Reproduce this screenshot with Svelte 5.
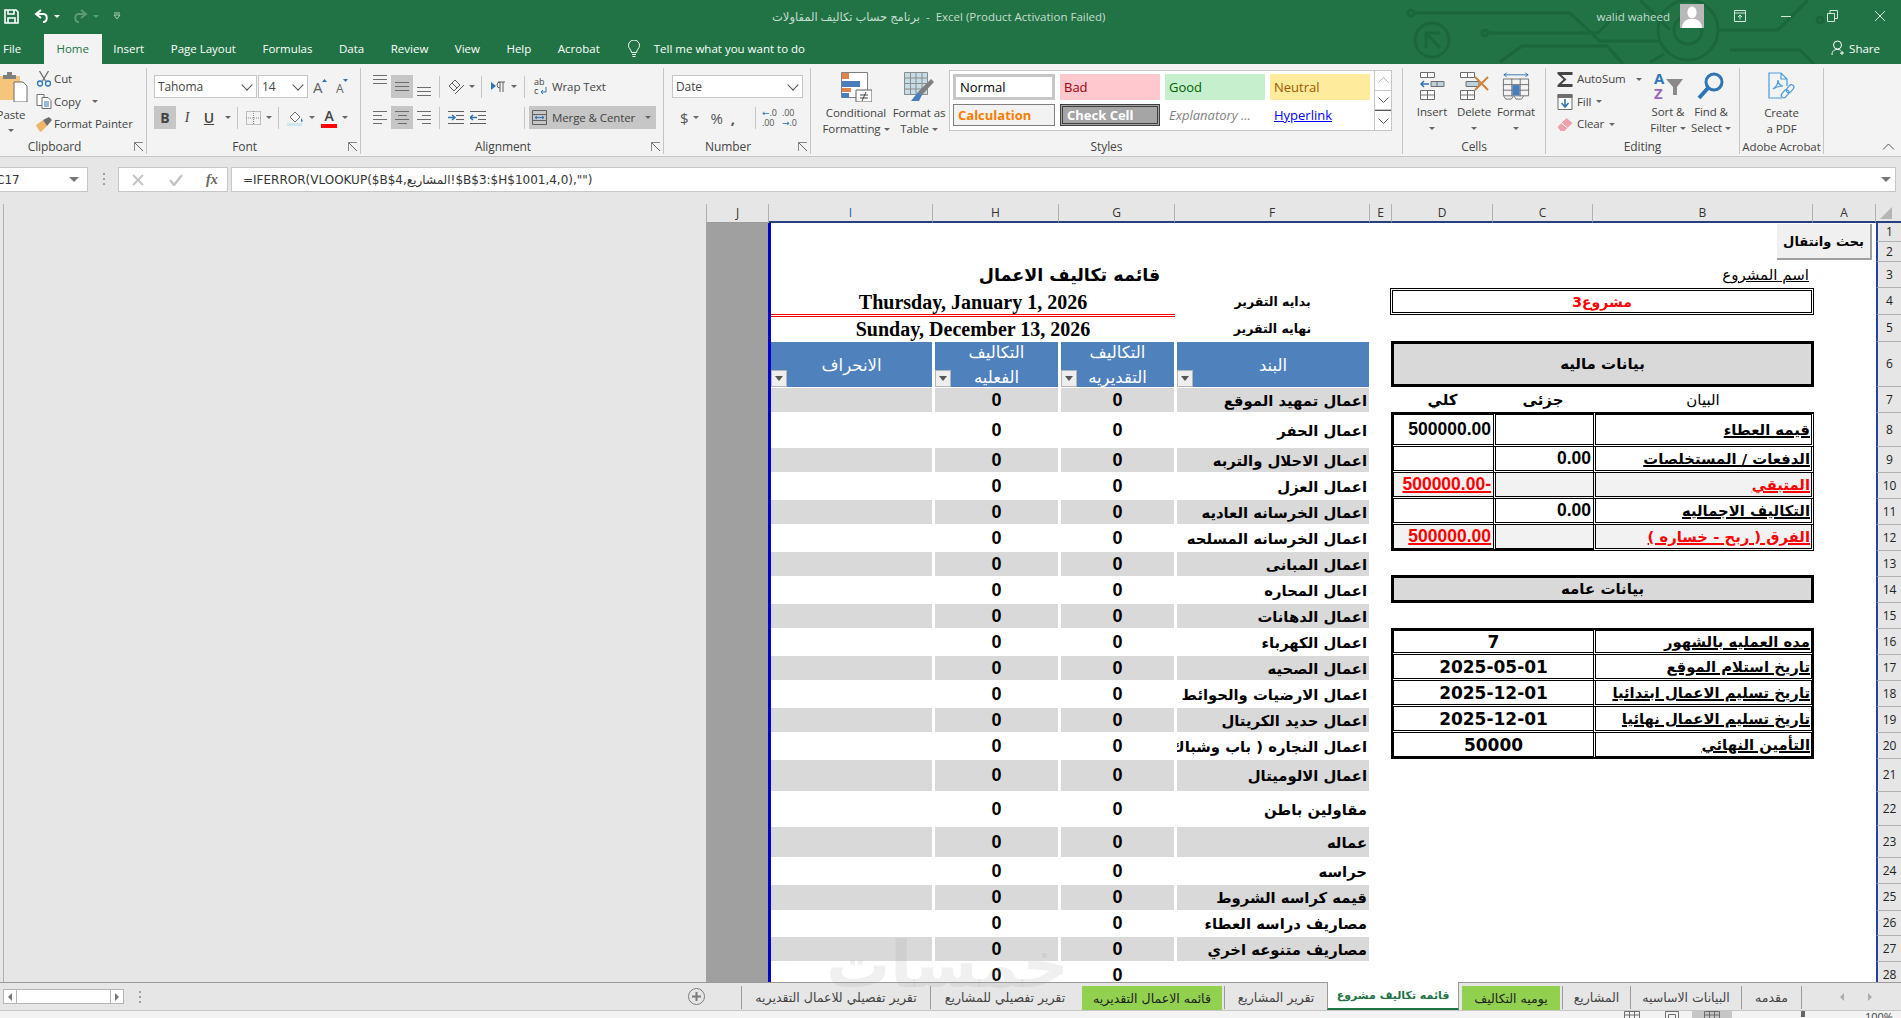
<script>
	const cols = ['J', 'I', 'H', 'G', 'F', 'E', 'D', 'C', 'B', 'A'];
	const rows = Array.from({ length: 28 }, (_, i) => i + 1);

	const items = [
		'اعمال تمهيد الموقع',
		'اعمال الحفر',
		'اعمال الاحلال والتربه',
		'اعمال العزل',
		'اعمال الخرسانه العاديه',
		'اعمال الخرسانه المسلحه',
		'اعمال المبانى',
		'اعمال المحاره',
		'اعمال الدهانات',
		'اعمال الكهرباء',
		'اعمال الصحيه',
		'اعمال الارضيات والحوائط',
		'اعمال حديد الكريتال',
		'اعمال النجاره ( باب وشباك )',
		'اعمال الالوميتال',
		'مقاولين باطن',
		'عماله',
		'حراسه',
		'قيمه كراسه الشروط',
		'مصاريف دراسه العطاء',
		'مصاريف متنوعه اخري',
		''
	];

	const finance = [
		{ r: 8, label: 'قيمه العطاء', part: '', total: '500000.00' },
		{ r: 9, label: 'الدفعات / المستخلصات', part: '0.00', total: '' },
		{ r: 10, label: 'المتبقي', part: '', total: '500000.00-', red: true },
		{ r: 11, label: 'التكاليف الاجماليه', part: '0.00', total: '' },
		{ r: 12, label: 'الفرق ( ربح - خساره )', part: '', total: '500000.00', red: true, last: true }
	];

	const general = [
		{ r: 16, label: 'مده العمليه بالشهور', value: '7' },
		{ r: 17, label: 'تاريخ استلام الموقع', value: '2025-05-01' },
		{ r: 18, label: 'تاريخ تسليم الاعمال ابتدائيا', value: '2025-12-01' },
		{ r: 19, label: 'تاريخ تسليم الاعمال نهائيا', value: '2025-12-01' },
		{ r: 20, label: 'التأمين النهائي', value: '50000' }
	];

	const sheetTabs = [
		{ name: 'تقرير تفصيلي للاعمال التقديريه' },
		{ name: 'تقرير تفصيلي للمشاريع' },
		{ name: 'قائمه الاعمال التقديريه', green: true },
		{ name: 'تقرير المشاريع' },
		{ name: 'قائمه تكاليف مشروع', active: true },
		{ name: 'يوميه التكاليف', green: true },
		{ name: 'المشاريع' },
		{ name: 'البيانات الاساسيه' },
		{ name: 'مقدمه' }
	];

	const menu = ['Insert', 'Page Layout', 'Formulas', 'Data', 'Review', 'View', 'Help', 'Acrobat'];
</script>

<div class="app">
	<header class="title">
		<svg class="circuit" width="520" height="64" viewBox="0 0 520 64" fill="none" stroke="#1b663c" stroke-width="3">
			<circle cx="11" cy="13" r="3" />
			<path d="M14 13H170l30 28h60" />
			<circle cx="32" cy="40" r="17" />
			<path d="M26 48V33h14M26 33l14 15" />
			<circle cx="85" cy="33" r="3" />
			<path d="M88 33h110l22-22" />
			<path d="M100 62l22-16h85l16 18" />
			<circle cx="288" cy="30" r="30" />
			<circle cx="288" cy="30" r="14" />
			<path d="M240 0l30 30M318 30h60l30-30M330 50h70l14 14M250 62l14-8" />
			<circle cx="420" cy="20" r="3" />
		</svg>
		<div class="qat">
			<svg width="15" height="15" viewBox="0 0 15 15" fill="none" stroke="#fff" stroke-width="1.6"><path d="M1 1h11l2 2v11H1zM4 1v4h6V1M4 14V9h7v5" /></svg>
			<svg class="undo" width="15" height="14" viewBox="0 0 15 14" fill="none" stroke="#fff" stroke-width="2"><path d="M7 1L2 5l5 4M2 5h7c5 0 5 8 0 8" /></svg>
			<i class="car white"></i>
			<svg class="redo" width="15" height="14" viewBox="0 0 15 14" fill="none" stroke="#5c9a78" stroke-width="2"><path d="M8 1l5 4-5 4M13 5H6c-5 0-5 8 0 8" /></svg>
			<i class="car dim"></i>
			<svg class="custom" width="8" height="8" viewBox="0 0 8 8" fill="none" stroke="#a9cdb9"><path d="M1 1h6M1 3l3 4 3-4z" /></svg>
		</div>
		<div class="doc">برنامج حساب تكاليف المقاولات &nbsp;-&nbsp; Excel (Product Activation Failed)</div>
		<div class="win">
			<span class="user">walid waheed</span>
			<span class="avatar">
				<svg width="24" height="24" viewBox="0 0 24 24" fill="#fff"><ellipse cx="12" cy="8.5" rx="4.6" ry="6" /><path d="M2 24c0-6 4-8 7-9h6c3 1 7 3 7 9z" /></svg>
			</span>
			<svg class="w1" width="12" height="12" viewBox="0 0 12 12" fill="none" stroke="#d6e7dd"><path d="M.5.5h11v11H.5zM.5 3h11M6 9.5V5M4 7l2-2 2 2" /></svg>
			<svg class="w2" width="11" height="12" viewBox="0 0 11 12" stroke="#d6e7dd"><path d="M0 6.5h10" /></svg>
			<svg class="w3" width="11" height="12" viewBox="0 0 11 12" fill="none" stroke="#d6e7dd"><path d="M.5 3.5h7v8h-7zM3 3.5V.5h7.500v8H7.500" /></svg>
			<svg class="w4" width="12" height="12" viewBox="0 0 12 12" stroke="#d6e7dd"><path d="M1 1l10 10M11 1L1 11" /></svg>
		</div>
	</header>

	<nav class="menu">
		<span class="file">File</span>
		<span class="home">Home</span>
		{#each menu as m}
			<span>{m}</span>
		{/each}
		<svg class="bulb" width="12" height="17" viewBox="0 0 12 17" fill="none" stroke="#fff"><path d="M3.500 12.500C3 9 .5 8.500.5 5.500a5.500 5.500 0 0 1 11 0c0 3-2.500 3.500-3 7zM4 14.500h4M4.500 16.500h3" /></svg>
		<span class="tell">Tell me what you want to do</span>
		<span class="share">
			<svg width="15" height="16" viewBox="0 0 15 16" fill="none" stroke="#fff"><circle cx="6.500" cy="5" r="4" /><path d="M1 15c0-4 2-5.500 5.500-5.500 1.500 0 2.500.3 3.300.9M11 11v4M9 13h4" /></svg>
			Share
		</span>
	</nav>

	<section class="ribbon">
		<div class="grp clip">
			<div class="body">
				<div class="paste">
					<svg width="28" height="30" viewBox="0 0 28 30">
						<path d="M-2 4h22v24H-2z" fill="#f5c57c" />
						<path d="M3 3h4V0h5v3h4v4H3z" fill="#7f7f7f" />
						<path d="M14 10h9l4 4v16H14z" fill="#fff" stroke="#6d6d6d" />
					</svg>
					<span>Paste</span>
					<i class="car"></i>
				</div>
				<div class="stack">
					<div class="si">
						<svg width="15" height="16" viewBox="0 0 15 16" fill="none" stroke="#6d6d6d" stroke-width="1.300"><path d="M3 0l6 10M12 0L6 10" /><circle cx="3.500" cy="12.500" r="2.500" stroke="#2f75b5" /><circle cx="11.500" cy="12.500" r="2.500" stroke="#2f75b5" /></svg>
						<span>Cut</span>
					</div>
					<div class="si">
						<svg width="15" height="15" viewBox="0 0 15 15" fill="#fff" stroke="#6d6d6d"><path d="M.5.5h7v11h-7z" /><path d="M5.500 3.500h6l3 3v8h-9z" /><path d="M7.500 8h5M7.500 10h5M7.500 12h5" stroke="#2f75b5" /></svg>
						<span>Copy</span>
						<i class="car copycar"></i>
					</div>
					<div class="si">
						<svg width="16" height="15" viewBox="0 0 16 15"><path d="M0 8l7-5 4 6-6 6C3 14 1 11 0 8z" fill="#efb66a" /><path d="M7 3l6-3 3 3-5 6z" fill="#6d6d6d" /></svg>
						<span>Format Painter</span>
					</div>
				</div>
			</div>
			<div class="label">Clipboard<b class="launch"></b></div>
		</div>

		<div class="grp font">
			<div class="body col">
				<div class="line">
					<div class="select fname">Tahoma<i class="chev"></i></div>
					<div class="select fsize">14<i class="chev"></i></div>
					<svg class="grow" width="14" height="15" viewBox="0 0 14 15"><text x="0" y="14" font-size="15" fill="#5f5f5f" font-family="Open Sans">A</text><path d="M9 3l2.500-3L14 3z" fill="#2f75b5" /></svg>
					<svg class="shrink" width="14" height="15" viewBox="0 0 14 15"><text x="1" y="14" font-size="12" fill="#5f5f5f" font-family="Open Sans">A</text><path d="M8 0h5l-2.500 3z" fill="#2f75b5" /></svg>
				</div>
				<div class="line second">
					<span class="tool on bold">B</span>
					<span class="tool ital">I</span>
					<span class="tool under">U</span><i class="car"></i>
					<b class="sep"></b>
					<svg class="bord" width="15" height="14" viewBox="0 0 15 14" fill="none" stroke="#8a8a8a" stroke-dasharray="1 1"><path d="M.5.500h14v13H.5zM7.500 0v14M0 7h15" /></svg><i class="car"></i>
					<b class="sep"></b>
					<svg class="fill" width="17" height="16" viewBox="0 0 17 16"><path d="M3 7l5-5 5 5-5 5z" fill="#fff" stroke="#6d6d6d" /><path d="M14 8l2 3-2 1z" fill="#2f75b5" /><path d="M0 13h15v3H0z" fill="#cfe6ee" /></svg><i class="car"></i>
					<span class="acolor">A</span><i class="car"></i>
				</div>
			</div>
			<div class="label">Font<b class="launch"></b></div>
		</div>

		<div class="grp align">
			<div class="body col">
				<div class="line">
					<span class="al top"><b></b><b></b><b></b></span>
					<span class="al on mid"><b></b><b></b><b></b></span>
					<span class="al bot"><b></b><b></b><b></b></span>
					<b class="sep s1"></b>
					<svg class="orient" width="17" height="15" viewBox="0 0 17 15" fill="none" stroke="#5f5f5f"><path d="M1 7l6-6 5 5-6 6zM4 4l5 5M16 6L7 15" /></svg><i class="car"></i>
					<b class="sep s2"></b>
					<svg class="rtl" width="15" height="12" viewBox="0 0 15 12"><path d="M0 1l5 4-5 4z" fill="#2f75b5" /><path d="M7 1h7M9 1v10M12 1v10M9 1a3 3 0 0 0 0 6" fill="none" stroke="#5f5f5f" /></svg><i class="car"></i>
					<b class="sep s3"></b>
					<span class="wrap"><svg width="15" height="17" viewBox="0 0 15 17" fill="none"><text x="0" y="7" font-size="9" fill="#444" font-family="Open Sans">ab</text><text x="0" y="16" font-size="9" fill="#444" font-family="Open Sans">c</text><path d="M12 9v5H7M9 12l-2 2 2 2" stroke="#2f75b5" /></svg>Wrap Text</span>
				</div>
				<div class="line second">
					<span class="al hl"><b></b><b class="s"></b><b></b><b class="s"></b></span>
					<span class="al on hc"><b></b><b class="s"></b><b></b><b class="s"></b></span>
					<span class="al hr"><b></b><b class="s"></b><b></b><b class="s"></b></span>
					<b class="sep s1"></b>
					<svg class="ind" width="16" height="13" viewBox="0 0 16 13" fill="none" stroke="#5f5f5f"><path d="M0 .5h16M8 4.500h8M8 8.500h8M0 12.500h16" /><path d="M0 6.500h6M4 4l3 2.500L4 9" stroke="#2f75b5" stroke-width="1.500" /></svg>
					<svg class="ind" width="16" height="13" viewBox="0 0 16 13" fill="none" stroke="#5f5f5f"><path d="M0 .5h16M8 4.500h8M8 8.500h8M0 12.500h16" /><path d="M7 6.500H1M3 4L0 6.500 3 9" stroke="#2f75b5" stroke-width="1.500" /></svg>
					<b class="sep s4"></b>
					<span class="merge">
						<svg width="15" height="15" viewBox="0 0 15 15" fill="none" stroke="#5f5f5f"><path d="M.5.5h14v14H.5zM0 4.500h15M0 10.500h15" /><path d="M3 7.500h9M5 6L3 7.500 5 9M10 6l2 1.500L10 9" stroke="#2f75b5" /></svg>
						Merge &amp; Center<i class="car"></i>
					</span>
				</div>
			</div>
			<div class="label">Alignment<b class="launch"></b></div>
		</div>

		<div class="grp num">
			<div class="body col">
				<div class="line"><div class="select fdate">Date<i class="chev"></i></div></div>
				<div class="line second">
					<span class="sym dollar">$</span><i class="car"></i>
					<span class="sym pct">%</span>
					<span class="sym comma">,</span>
					<b class="sep"></b>
					<span class="dec"><em>←</em>.0<br />.00</span>
					<span class="dec">.00<br /><em>→</em>.0</span>
				</div>
			</div>
			<div class="label">Number<b class="launch"></b></div>
		</div>

		<div class="grp styles">
			<div class="body">
				<div class="big cf">
					<svg width="31" height="30" viewBox="0 0 31 30">
						<path d="M.5.500h26v25H.5z" fill="#fff" stroke="#7f7f7f" />
						<path d="M1 1h7v6H1z" fill="#e0824b" /><path d="M1 9h18v6H1z" fill="#4a7ebb" /><path d="M1 16h9v4H1z" fill="#e0824b" /><path d="M1 21h7v5H1z" fill="#4a7ebb" />
						<path d="M15 18h16v12H15z" fill="#fff" stroke="#5f5f5f" />
						<path d="M19 23h8M19 26h8M21 29l4-9" stroke="#444" fill="none" />
					</svg>
					<span>Conditional</span>
					<span>Formatting<i class="car"></i></span>
				</div>
				<div class="big ft">
					<svg width="30" height="30" viewBox="0 0 30 30">
						<path d="M.5.500h23v22H.5z" fill="#c5dde6" stroke="#8c8c8c" />
						<path d="M.5 6h23M.5 11.500h23M.5 17h23M6.500 0v23M12 0v23M18 0v23" stroke="#8c8c8c" fill="none" />
						<path d="M27 7l3 3-12 13-4-3z" fill="#7f7f7f" /><path d="M14 20l4 3-3 6H7z" fill="#4a7ebb" />
					</svg>
					<span>Format as</span>
					<span>Table<i class="car"></i></span>
				</div>
				<div class="gallery">
					<div class="cells">
						<span class="st normal">Normal</span>
						<span class="st bad">Bad</span>
						<span class="st good">Good</span>
						<span class="st neutral">Neutral</span>
						<span class="st calc">Calculation</span>
						<span class="st check">Check Cell</span>
						<span class="st expl">Explanatory ...</span>
						<span class="st link">Hyperlink</span>
					</div>
					<div class="scroll">
						<span><svg width="11" height="6" viewBox="0 0 11 6" fill="none" stroke="#b5b5b5"><path d="M.5 5.500l5-5 5 5" /></svg></span>
						<span><svg width="11" height="6" viewBox="0 0 11 6" fill="none" stroke="#555"><path d="M.5.500l5 5 5-5" /></svg></span>
						<span class="more"><svg width="11" height="6" viewBox="0 0 11 6" fill="none" stroke="#555"><path d="M.5.500l5 5 5-5" /></svg></span>
					</div>
				</div>
			</div>
			<div class="label">Styles</div>
		</div>

		<div class="grp cellsg">
			<div class="body">
				<div class="big cb">
					<svg width="26" height="28" viewBox="0 0 26 28" fill="#fff" stroke="#6d6d6d"><path d="M1.500.500h14v5h-14zM8.500.500v5M1.500 18.500h14v9h-14zM8.500 18.500v9M1.500 23h14" /><path d="M12 9.500h13v5H12zM18 9.500v5" fill="#bcd3de" /><path d="M10 12H2M5 9l-3 3 3 3" fill="none" stroke="#2f75b5" stroke-width="1.500" /></svg>
					<span>Insert</span><i class="car"></i>
				</div>
				<div class="big cb">
					<svg width="30" height="28" viewBox="0 0 30 28" fill="#fff" stroke="#6d6d6d"><path d="M1.500.500h14v5h-14zM8.500.500v5M1.500 18.500h14v9h-14zM8.500 18.500v9M1.500 23h14" /><path d="M7 9.500h13v5H7z" fill="#bcd3de" /><path d="M16 5l13 13M29 5L16 18" stroke="#d2803c" stroke-width="2" fill="none" /></svg>
					<span>Delete</span><i class="car"></i>
				</div>
				<div class="big cb">
					<svg width="28" height="30" viewBox="0 0 28 30" fill="none" stroke="#6d6d6d"><path d="M1 3h26M4 1L1 3l3 2M24 1l3 2-3 2" stroke="#2f75b5" /><path d="M.5 7.500h27v18H.5zM9.500 7v19M18.500 7v19M0 13.500h28M0 19.500h28" /><path d="M10 14h8v11h-8z" fill="#4a7ebb" stroke="none" /><path d="M1 26l2 3h6l2-3M12 26l2 3h6l2-3" /></svg>
					<span>Format</span><i class="car"></i>
				</div>
			</div>
			<div class="label">Cells</div>
		</div>

		<div class="grp edit">
			<div class="body">
				<div class="stack">
					<div class="si">
						<svg width="15" height="15" viewBox="0 0 15 15" fill="#444"><path d="M0 0h15v3H4l5 4.500L4 12h11v3H0v-2l6-5.500L0 2z" /></svg>
						<span>AutoSum</span><i class="car sumcar"></i>
					</div>
					<div class="si">
						<svg width="15" height="16" viewBox="0 0 15 16" fill="#fff" stroke="#6d6d6d"><path d="M.5.500h14v15H.5z" /><path d="M.5.500h14v3H.5z" fill="#6d6d6d" /><path d="M7.500 5v8M4 9l3.500 4L11 9" fill="none" stroke="#2f75b5" stroke-width="1.600" /></svg>
						<span>Fill</span><i class="car"></i>
					</div>
					<div class="si">
						<svg width="15" height="14" viewBox="0 0 15 14"><path d="M0 10L9 1l6 5-8 8H3z" fill="#f0a0ad" /><path d="M4 6l6 5" stroke="#fff" /></svg>
						<span>Clear</span><i class="car"></i>
					</div>
				</div>
				<div class="big sf">
					<svg width="30" height="28" viewBox="0 0 30 28"><text x="1" y="12" font-size="15" font-weight="700" fill="#2f75b5" font-family="Open Sans">A</text><text x="1" y="27" font-size="15" font-weight="700" fill="#9966bb" font-family="Open Sans">Z</text><path d="M13 7h17l-6 8v8h-4v-8z" fill="#8a8a8a" /></svg>
					<span>Sort &amp;</span>
					<span>Filter<i class="car"></i></span>
				</div>
				<div class="big fs">
					<svg width="28" height="28" viewBox="0 0 28 28" fill="none"><circle cx="17" cy="10" r="8" stroke="#2f75b5" stroke-width="3" /><path d="M11 16L2 26" stroke="#2f75b5" stroke-width="4" /></svg>
					<span>Find &amp;</span>
					<span>Select<i class="car"></i></span>
				</div>
			</div>
			<div class="label">Editing</div>
		</div>

		<div class="grp acro">
			<div class="body">
				<div class="big pdf">
					<svg width="27" height="30" viewBox="0 0 27 30" fill="none" stroke="#4a9be0" stroke-width="1.200"><path d="M14 26H1V1h12l6 6v7M13 1v6h6" /><path d="M5 17c3-2 5-6 5-9 0 4 3 6 5 6-3 0-7 1-10 3z" /><rect x="15" y="17" width="5" height="9" rx="2.500" transform="rotate(40 17 21)" /><rect x="20" y="12" width="5" height="9" rx="2.500" transform="rotate(40 22 16)" /></svg>
					<span>Create</span>
					<span>a PDF</span>
				</div>
			</div>
			<div class="label">Adobe Acrobat</div>
		</div>

		<div class="grp end">
			<svg width="13" height="7" viewBox="0 0 13 7" fill="none" stroke="#555"><path d="M1 6.500l5.500-5.500 5.500 5.500" /></svg>
		</div>
	</section>

	<div class="fbar">
		<div class="namebox"><span>C17</span><i class="carb"></i></div>
		<div class="dots"><b></b><b></b><b></b></div>
		<div class="fxbox">
			<svg width="12" height="12" viewBox="0 0 12 12" stroke="#c4c4c4" stroke-width="2"><path d="M1 1l10 10M11 1L1 11" /></svg>
			<svg width="14" height="12" viewBox="0 0 14 12" fill="none" stroke="#c4c4c4" stroke-width="2.500"><path d="M1 6l4 5 8-10" /></svg>
			<span class="fx">fx</span>
		</div>
		<div class="input">
			<span>=IFERROR(VLOOKUP($B$4,المشاريع!$B$3:$H$1001,4,0),"")</span>
			<i class="carb"></i>
		</div>
	</div>

	<div class="main">
		<div class="side"></div>
		<div class="sheet">
			{#each cols as c}
				<div class="colhead" class:first={c === 'J'} class:sel={c === 'I'} style="grid-column:{c.toLowerCase()}">{c}</div>
			{/each}
			<div class="corner"><b></b></div>
			{#each rows as r}
				<div class="rowhead" style="grid-row:{r + 1}">{r}</div>
			{/each}

			<div class="jfill"></div>

			<div class="cell sheet-title r3">قائمه تكاليف الاعمال</div>
			<div class="cell date ci-g r4 under-red">Thursday, January 1, 2026</div>
			<div class="cell date ci-g r5">Sunday, December 13, 2026</div>
			<div class="cell sub cf r4">بدايه التقرير</div>
			<div class="cell sub cf r5">نهايه التقرير</div>

			<div class="cell th ci r6"><span>الانحراف</span><i class="filter"></i></div>
			<div class="cell th ch r6"><span>التكاليف الفعليه</span><i class="filter"></i></div>
			<div class="cell th cg r6"><span>التكاليف التقديريه</span><i class="filter"></i></div>
			<div class="cell th cf r6"><span>البند</span><i class="filter"></i></div>

			{#each items as item, i}
				<div class="cell td ci" class:gray={i % 2 === 0 && item} style="grid-row:{i + 8}"></div>
				<div class="cell td num-c ch" class:gray={i % 2 === 0 && item} style="grid-row:{i + 8}">0</div>
				<div class="cell td num-c cg" class:gray={i % 2 === 0 && item} style="grid-row:{i + 8}">0</div>
				<div class="cell td name cf" class:gray={i % 2 === 0 && item} style="grid-row:{i + 8}"><span>{item}</span></div>
			{/each}

			<div class="cell pname-l r3">اسم المشروع</div>
			<div class="cell pname r4">مشروع3</div>
			<div class="cell box big-box r6">بيانات ماليه</div>
			<div class="cell colt cd r7 strong">كلي</div>
			<div class="cell colt cc r7 strong">جزئى</div>
			<div class="cell colt cb-col r7">البيان</div>

			{#each finance as row}
				<div class="cell fin cd val" class:red={row.red} class:tint={row.red} class:first-row={row.r === 8} class:left-edge={true} class:bottom-edge={row.last} style="grid-row:{row.r + 1}"><span>{row.total}</span></div>
				<div class="cell fin cc val" class:tint={row.red} class:first-row={row.r === 8} class:bottom-edge={row.last} style="grid-row:{row.r + 1}"><span>{row.part}</span></div>
				<div class="cell fin cb-col lbl right-dbl" class:red={row.red} class:tint={row.red} class:first-row={row.r === 8} style="grid-row:{row.r + 1}"><span>{row.label}</span></div>
			{/each}

			<div class="cell box small-box r14">بيانات عامه</div>

			{#each general as row, i}
				<div class="cell fin cd-c gval left-edge right-line" class:first-row={i === 0} class:bottom-edge={i === 4} style="grid-row:{row.r + 1}">{row.value}</div>
				<div class="cell fin cb-col lbl right-edge" class:first-row={i === 0} class:bottom-edge={i === 4} style="grid-row:{row.r + 1}"><span>{row.label}</span></div>
			{/each}

			<button class="jump" type="button">بحث وانتقال</button>
		</div>
	</div>

	<div class="tabsbar">
		<div class="hscroll">
			<span class="arrow"><b class="la"></b></span>
			<span class="track"></span>
			<span class="arrow"><b class="ra"></b></span>
		</div>
		<div class="dots tdots"><b></b><b></b><b></b></div>
		<svg class="plus" width="17" height="17" viewBox="0 0 17 17" fill="none" stroke="#7a7a7a"><circle cx="8.500" cy="8.500" r="8" /><path d="M8.500 4v9M4 8.500h9" stroke-width="2" /></svg>
		<div class="tablist">
			{#each sheetTabs as t}
				<span class="stab" class:active={t.active} class:green={t.green}>{t.name}</span>
			{/each}
		</div>
		<div class="nav"><b class="la"></b><b class="ra"></b></div>
	</div>

	<footer class="status">
		<span class="v"><svg width="16" height="8" viewBox="0 0 16 8" fill="none" stroke="#6d6d6d"><path d="M.5.500h15v8H.5zM5.500 0v8M10.500 0v8M0 4h16" /></svg></span>
		<span class="v"><svg width="14" height="8" viewBox="0 0 14 8" fill="none" stroke="#6d6d6d"><path d="M.5.500h13v8H.5zM3.500 3.500h7v5h-7z" /></svg></span>
		<span class="v act"><svg width="16" height="8" viewBox="0 0 16 8" fill="none" stroke="#6d6d6d"><path d="M.5.500h15v8H.5zM5.500 0v8M10.500 0v8M0 4h16" /></svg></span>
		<i class="thumb"></i>
		<span class="pct-s">100%</span>
	</footer>

	<div class="mark">خمسات</div>
</div>

<style>
	:global(body) {
		margin: 0;
		background: #e6e6e6;
	}

	.app {
		position: relative;
		width: 1901px;
		height: 1018px;
		overflow: hidden;
		display: flex;
		flex-direction: column;
		font-family: 'Open Sans', 'DejaVu Sans', sans-serif;
		font-size: 12px;
		color: #444;
	}

	i,
	b {
		display: block;
		font-style: normal;
	}

	/* title bar */
	.title {
		position: relative;
		height: 32px;
		flex: none;
		background: #217346;
		display: grid;
		grid-template-columns: 772px auto 1fr;
		align-items: center;
		color: #fff;
	}

	.circuit {
		position: absolute;
		left: 1400px;
		top: 0;
		z-index: 1;
	}

	.qat {
		display: flex;
		align-items: center;
		padding-left: 4px;
	}

	.undo {
		margin-left: 15px;
	}

	.redo {
		margin-left: 13px;
	}

	.custom {
		margin-left: 14px;
	}

	.car {
		display: inline-block;
		width: 0;
		height: 0;
		border: 3px solid transparent;
		border-top: 3.5px solid #666;
		border-bottom: 0;
		margin-left: 5px;
	}

	.car.white {
		border-top-color: #fff;
	}

	.car.dim {
		border-top-color: #5c9a78;
	}

	.doc {
		font-size: 11.5px;
		color: #c6dccf;
		white-space: nowrap;
	}

	.win {
		display: flex;
		align-items: center;
		justify-content: flex-end;
		position: relative;
		z-index: 2;
	}

	.user {
		color: #c6dccf;
		font-size: 11.5px;
		margin-right: 10px;
	}

	.avatar {
		width: 24px;
		height: 24px;
		background: #b8b8b8;
		display: block;
		margin-right: 30px;
	}

	.avatar svg {
		display: block;
	}

	.w1 {
		margin-right: 35px;
	}

	.w2 {
		margin-right: 35px;
	}

	.w3 {
		margin-right: 36px;
	}

	.w4 {
		margin-right: 15px;
	}

	/* menu */
	.menu {
		height: 32px;
		flex: none;
		background: #217346;
		display: flex;
		align-items: center;
		color: #fff;
		font-size: 11.5px;
		gap: 26.5px;
	}

	.file {
		margin-left: 3px;
		margin-right: -4px;
	}

	.home {
		align-self: flex-end;
		height: 30px;
		line-height: 30px;
		width: 58px;
		text-align: center;
		background: #f3f3f3;
		color: #217346;
		margin-right: -15px;
	}

	.bulb {
		margin-left: 2px;
		margin-right: -13px;
	}

	.share {
		margin-left: auto;
		margin-right: 21px;
		display: flex;
		align-items: center;
		gap: 3px;
		position: relative;
		z-index: 2;
	}

	/* ribbon */
	.ribbon {
		height: 93px;
		flex: none;
		box-sizing: border-box;
		background: #f3f3f3;
		border-bottom: 1px solid #c6c6c6;
		display: grid;
		grid-template-columns: 147px 214px 303px 147px 592px 143px 194px 84px 1fr;
		padding: 4px 0 3px;
		font-size: 11.5px;
		letter-spacing: -0.1px;
		line-height: 16px;
	}

	.grp {
		box-sizing: border-box;
		border-right: 1px solid #c6c6c6;
		display: grid;
		grid-template-rows: 1fr 17px;
		min-width: 0;
	}

	.grp.end {
		border: 0;
		display: flex;
		justify-content: flex-end;
		align-items: flex-end;
		padding: 0 6px 4px 0;
	}

	.body {
		display: flex;
		min-width: 0;
	}

	.body.col {
		flex-direction: column;
		padding-top: 7px;
	}

	.label {
		position: relative;
		text-align: center;
		color: #444;
		font-size: 12px;
		line-height: 16px;
		padding-top: 2px;
	}

	.clip .label {
		padding-right: 37px;
	}

	.font .label,
	.align .label,
	.num .label {
		padding-right: 18px;
	}

	.launch {
		position: absolute;
		right: 3px;
		top: 5px;
		width: 8px;
		height: 8px;
		border-left: 1px solid #888;
		border-top: 1px solid #888;
		background: linear-gradient(45deg, transparent 45%, #666 45%, #666 55%, transparent 55%);
	}

	.line {
		display: flex;
		align-items: center;
		height: 23px;
	}

	.line.second {
		margin-top: 8px;
	}

	.sep {
		width: 1px;
		height: 22px;
		background: #c6c6c6;
		flex: none;
	}

	/* clipboard */
	.paste {
		width: 34px;
		display: flex;
		flex-direction: column;
		align-items: center;
		padding-top: 4px;
		margin-left: -6px;
		flex: none;
	}

	.paste svg {
		margin-left: 5px;
	}

	.paste span {
		margin-top: 5px;
	}

	.paste .car {
		margin: 6px 0 0;
	}

	.clip .stack {
		margin-left: 8px;
		margin-top: 0;
		padding-top: 0;
	}

	.stack {
		display: flex;
		flex-direction: column;
		padding-top: 2px;
	}

	.si {
		display: flex;
		align-items: center;
		height: 22.500px;
		white-space: nowrap;
	}

	.si svg {
		flex: none;
		width: 16px;
		margin-right: 2px;
	}

	.copycar {
		margin-left: 11px;
	}

	/* font */
	.font .body {
		padding-left: 7px;
	}

	.select {
		box-sizing: border-box;
		height: 23px;
		background: #fff;
		border: 1px solid #c6c6c6;
		display: flex;
		align-items: center;
		padding-left: 3px;
		position: relative;
		font-size: 12px;
	}

	.chev {
		position: absolute;
		right: 5px;
		top: 5px;
		width: 7px;
		height: 7px;
		border-right: 1px solid #555;
		border-bottom: 1px solid #555;
		transform: rotate(45deg);
	}

	.fname {
		width: 103px;
		margin-right: 1px;
	}

	.fsize {
		width: 50px;
	}

	.grow {
		margin-left: 5px;
	}

	.shrink {
		margin-left: 8px;
	}

	.tool {
		width: 22px;
		height: 23px;
		line-height: 23px;
		text-align: center;
		font-size: 14px;
	}

	.tool.on,
	.al.on {
		background: #c6c6c6;
	}

	.bold {
		font-weight: 700;
	}

	.ital {
		font-style: italic;
		font-family: 'Liberation Serif', serif;
	}

	.under {
		text-decoration: underline;
		font-weight: 600;
	}

	.font .second .sep {
		margin: 0 8px 0 6px;
	}

	.acolor {
		width: 16px;
		margin-left: 6px;
		text-align: center;
		font-weight: 600;
		font-size: 14px;
		line-height: 17px;
		border-bottom: 4px solid #f00;
	}

	/* alignment */
	.align .body {
		padding-left: 8px;
	}

	.al {
		width: 22px;
		height: 23px;
		display: flex;
		flex-direction: column;
		align-items: center;
		gap: 3px;
		box-sizing: border-box;
		padding: 0 4px;
		flex: none;
	}

	.al b {
		height: 1px;
		width: 14px;
		background: #6d6d6d;
	}

	.al.top {
		justify-content: flex-start;
	}

	.al.mid {
		justify-content: center;
	}

	.al.bot {
		justify-content: flex-end;
		padding-bottom: 2px;
	}

	.al.hl,
	.al.hc,
	.al.hr {
		justify-content: center;
	}

	.al.hl {
		align-items: flex-start;
	}

	.al.hr {
		align-items: flex-end;
	}

	.al b.s {
		width: 9px;
	}

	.s1 {
		margin: 0 8px 0 4px;
	}

	.orient + .car {
		margin-left: 4px;
	}

	.s2 {
		margin: 0 9px 0 6px;
	}

	.s3 {
		margin: 0 9px 0 7px;
	}

	.wrap {
		display: flex;
		align-items: center;
		gap: 3px;
	}

	.ind + .ind {
		margin-left: 6px;
	}

	.s4 {
		margin: 0 4px 0 38px;
	}

	.merge {
		width: 127px;
		height: 23px;
		box-sizing: border-box;
		background: #c6c6c6;
		display: flex;
		align-items: center;
		padding-left: 3px;
		gap: 5px;
		white-space: nowrap;
		flex: none;
	}

	/* number */
	.num .body {
		padding-left: 8px;
	}

	.fdate {
		width: 131px;
	}

	.sym {
		font-size: 15px;
		color: #555;
	}

	.dollar {
		margin-left: 8px;
	}

	.pct {
		margin-left: 11px;
	}

	.comma {
		margin-left: 8px;
		font-weight: 700;
	}

	.num .sep {
		margin: 0 6px 0 20px;
	}

	.dec {
		font-size: 9px;
		line-height: 10px;
		width: 20px;
		color: #555;
		white-space: nowrap;
	}

	.dec em {
		font-style: normal;
		color: #2f75b5;
	}

	/* big buttons */
	.big {
		display: flex;
		flex-direction: column;
		align-items: center;
		white-space: nowrap;
		padding-top: 4px;
	}

	.big svg {
		margin-bottom: 4px;
		flex: none;
	}

	.cf.big svg,
	.ft.big svg,
	.pdf.big svg {
		margin-bottom: 3px;
	}

	.big .car {
		display: inline-block;
		vertical-align: middle;
		margin-left: 3px;
	}

	.cf.big {
		width: 74px;
		margin-left: 8px;
	}

	.ft.big {
		width: 58px;
		margin-left: -3px;
	}

	.gallery {
		margin: 2px 0 0 1px;
		width: 443px;
		height: 61px;
		box-sizing: border-box;
		border: 1px solid #c6c6c6;
		background: #fff;
		display: flex;
		font-size: 13px;
		letter-spacing: 0;
	}

	.cells {
		flex: 1;
		display: grid;
		grid-template-columns: 102px 100px 100px 100px;
		grid-template-rows: 26px 22px;
		column-gap: 5px;
		row-gap: 4px;
		padding: 3px 0 0 3px;
	}

	.st {
		display: flex;
		align-items: center;
		padding-left: 4px;
		white-space: nowrap;
		overflow: hidden;
		box-sizing: border-box;
	}

	.normal {
		border: 3px solid #c6c6c6;
		color: #000;
	}

	.bad {
		background: #ffc7ce;
		color: #9c0006;
	}

	.good {
		background: #c6efce;
		color: #006100;
	}

	.neutral {
		background: #ffeb9c;
		color: #9c5700;
	}

	.calc {
		background: #f2f2f2;
		border: 1px solid #7f7f7f;
		color: #fa7d00;
		font-weight: 700;
	}

	.check {
		background: #a5a5a5;
		border: 3px double #3f3f3f;
		color: #fff;
		font-weight: 700;
	}

	.expl {
		color: #7f7f7f;
		font-style: italic;
	}

	.link {
		color: #0000ff;
		text-decoration: underline;
	}

	.scroll {
		width: 16px;
		border-left: 1px solid #c6c6c6;
		display: flex;
		flex-direction: column;
	}

	.scroll span {
		flex: 1;
		display: flex;
		align-items: center;
		justify-content: center;
		border-bottom: 1px solid #c6c6c6;
	}

	.scroll .more {
		border-top: 1px solid #555;
		border-bottom: 0;
	}

	.cb {
		width: 42px;
	}

	.cb:first-child {
		margin-left: 8px;
	}

	.cb svg {
		height: 28px;
	}

	.cb .car {
		margin: 7px 0 0;
	}

	.edit .stack {
		margin-left: 11px;
		width: 86px;
		padding-top: 0;
	}

	.edit .si svg {
		margin-right: 4px;
	}

	.sumcar {
		margin-left: 10px;
	}

	.sf {
		width: 42px;
		margin-left: 4px;
	}

	.fs {
		width: 44px;
	}

	.pdf {
		width: 84px;
	}

	.acro .label {
		white-space: nowrap;
		font-size: 11.5px;
	}

	/* formula bar */
	.fbar {
		height: 47px;
		flex: none;
		box-sizing: border-box;
		padding-top: 10px;
		background: #e6e6e6;
		display: flex;
		align-items: flex-start;
		font-family: 'DejaVu Sans', sans-serif;
		font-size: 12px;
		color: #333;
	}

	.namebox {
		box-sizing: border-box;
		width: 88px;
		height: 25px;
		background: #fff;
		border: 1px solid #c6c6c6;
		border-left: 0;
		display: flex;
		align-items: center;
		justify-content: space-between;
		padding-right: 8px;
		overflow: hidden;
	}

	.namebox span {
		margin-left: -4px;
	}

	.carb {
		width: 0;
		height: 0;
		border: 5px solid transparent;
		border-top: 5px solid #777;
		border-bottom: 0;
	}

	.dots {
		display: flex;
		flex-direction: column;
		gap: 3px;
		margin: 6px 13px 0 15px;
	}

	.dots b {
		width: 2px;
		height: 2px;
		background: #a0a0a0;
	}

	.fxbox {
		box-sizing: border-box;
		width: 110px;
		height: 25px;
		background: #fff;
		border: 1px solid #c6c6c6;
		display: flex;
		align-items: center;
		padding-left: 13px;
		margin-right: 3px;
		gap: 25px;
	}

	.fx {
		font-family: 'Liberation Serif', serif;
		font-style: italic;
		font-weight: 700;
		font-size: 14px;
		color: #666;
		margin-left: -2px;
	}

	.input {
		box-sizing: border-box;
		width: 1665px;
		height: 25px;
		background: #fff;
		border: 1px solid #c6c6c6;
		display: flex;
		align-items: center;
		justify-content: space-between;
		padding: 0 4px 0 11px;
		white-space: nowrap;
		direction: ltr;
	}

	/* sheet */
	.main {
		height: 778px;
		flex: none;
		display: flex;
		background: #e6e6e6;
		overflow: hidden;
	}

	.side {
		width: 703px;
		margin-left: 3px;
		border-left: 1px solid #b1b1b1;
		box-sizing: border-box;
		flex: none;
	}

	.sheet {
		position: relative;
		flex: none;
		width: 1195px;
		display: grid;
		background: #fff;
		grid-template-columns:
			[j] 63px [i] 164px [h] 126px [g] 116px [f] 195px [e] 22px [d] 101px [c] 100px [b] 220px [a] 63px
			[rh] 25px;
		grid-template-rows:
			19px 19px 20px 26px 27px 27px 45px 26px 34px repeat(12, 26px) 33px 34px 32px 26px 27px 25px 26px 26px;
		overflow: hidden;
		font-family: 'Liberation Sans', 'DejaVu Sans', sans-serif;
		color: #000;
	}

	.colhead {
		grid-row: 1;
		background: #e6e6e6;
		border-right: 1px solid #b1b1b1;
		border-bottom: 2px solid #26407f;
		box-sizing: border-box;
		display: flex;
		align-items: center;
		justify-content: center;
		font-family: 'Open Sans', sans-serif;
		font-size: 12px;
		color: #333;
		line-height: 1;
	}

	.colhead.first {
		border-left: 1px solid #b1b1b1;
		border-bottom: 1px solid #9a9a9a;
	}

	.colhead.sel {
		color: #1f5fa8;
	}

	.corner {
		grid-row: 1;
		grid-column: rh;
		background: #e6e6e6;
		position: relative;
		border-bottom: 2px solid #26407f;
		box-sizing: border-box;
	}

	.corner b {
		position: absolute;
		left: 4px;
		top: 3px;
		width: 0;
		height: 0;
		border-left: 12px solid transparent;
		border-bottom: 12px solid #b5b5b5;
	}

	.rowhead {
		grid-column: rh;
		background: #e6e6e6;
		border-left: 2px solid #2a3fa8;
		border-bottom: 1px solid #b1b1b1;
		box-sizing: border-box;
		display: flex;
		align-items: center;
		justify-content: center;
		font-family: 'Open Sans', sans-serif;
		font-size: 12px;
		color: #222;
		line-height: 1;
		overflow: hidden;
	}

	.jfill {
		grid-column: j;
		grid-row: 2 / -1;
		background: #a0a0a0;
		border-right: 3px solid #0000d0;
		box-sizing: border-box;
		margin-right: -2px;
		z-index: 1;
	}

	.cell {
		min-width: 0;
		display: flex;
		align-items: center;
		justify-content: center;
		font-family: 'DejaVu Sans', sans-serif;
		white-space: nowrap;
		overflow: hidden;
	}

	.r3 { grid-row: 4; }
	.r4 { grid-row: 5; }
	.r5 { grid-row: 6; }
	.r6 { grid-row: 7; }
	.r7 { grid-row: 8; }
	.r14 { grid-row: 15; }

	.ci { grid-column: i; margin-left: 2px; }
	.ch { grid-column: h; }
	.cg { grid-column: g; }
	.cf { grid-column: f; }
	.cd { grid-column: d; }
	.cc { grid-column: c; }
	.cb-col { grid-column: b; }
	.cd-c { grid-column: d / b; }
	.ci-g { grid-column: i / f; margin-left: 2px; }

	.sheet-title {
		grid-column: i / e;
		font-size: 17.5px;
		font-weight: 700;
	}

	.date {
		font-family: 'Liberation Serif', serif;
		font-weight: 700;
		font-size: 20px;
		padding-top: 2px;
		box-sizing: border-box;
	}

	.under-red {
		border-bottom: 3px double #f00;
		margin-bottom: -2px;
		z-index: 1;
	}

	.sub {
		font-size: 12.5px;
		font-weight: 700;
	}

	.th {
		position: relative;
		background: #4f81bd;
		color: #fff;
		font-size: 16.5px;
		white-space: normal;
		text-align: center;
		line-height: 25px;
		margin-right: 1px;
		margin-left: 2px;
		align-items: center;
		overflow: hidden;
	}

	.th.ci {
		margin-left: 2px;
	}

	.th span {
		display: block;
		width: 86px;
		padding-top: 1px;
	}

	.filter {
		position: absolute;
		left: 0;
		bottom: 0;
		width: 16px;
		height: 17px;
		box-sizing: border-box;
		background: #eee;
		border: 1px solid #b5b5b5;
	}

	.filter::after {
		content: '';
		position: absolute;
		left: 3px;
		top: 5px;
		border: 4px solid transparent;
		border-top: 5px solid #555;
		border-bottom: 0;
	}

	.td {
		margin: 1px 1px 1px 2px;
	}

	.gray {
		background: #d9d9d9;
	}

	.num-c {
		font-family: 'Liberation Sans', sans-serif;
		font-weight: 700;
		font-size: 18px;
	}

	.name {
		justify-content: flex-start;
		direction: rtl;
		padding-right: 2px;
		font-size: 14.8px;
		font-weight: 700;
	}

	.pname-l {
		grid-column: b;
		padding-right: 4px;
		font-size: 15px;
		text-decoration: underline;
		direction: rtl;
		justify-content: flex-start;
	}

	.pname {
		grid-column: d / a;
		box-sizing: border-box;
		margin: 0 -1px 0 -2px;
		border: 3px double #000;
		color: #f00;
		font-weight: 700;
		font-size: 14px;
	}

	.box {
		grid-column: d / a;
		box-sizing: border-box;
		margin: 0 -1px 0 -1px;
		background: #d9d9d9;
		border: 3px solid #000;
		font-size: 15px;
		font-weight: 700;
	}

	.big-box {
		margin-top: -1px;
	}

	.small-box {
		margin-top: -2px;
	}

	.colt {
		font-size: 15px;
		font-weight: 400;
	}

	.colt.strong {
		font-weight: 700;
	}

	.fin {
		box-sizing: border-box;
		border-bottom: 3px double #000;
		border-left: 3px double #000;
		overflow: hidden;
	}

	.fin.first-row {
		border-top: 3px solid #000;
		margin-top: -1px;
	}

	.fin.left-edge {
		border-left: 3px solid #000;
		margin-left: -1px;
	}

	.fin.bottom-edge {
		border-bottom: 3px solid #000;
	}

	.fin.right-dbl {
		border-right: 3px double #000;
		margin-right: -1px;
	}

	.fin.right-edge {
		border-right: 3px solid #000;
		margin-right: -1px;
	}

	.val {
		justify-content: flex-end;
		padding-right: 2px;
		font-family: 'Liberation Sans', sans-serif;
		font-weight: 700;
		font-size: 17.500px;
	}

	.val.red span {
		text-decoration: underline;
		text-decoration-thickness: 2px;
	}

	.red {
		color: #f00;
	}

	.tint {
		background: #f2f2f2;
	}

	.gval {
		font-family: 'DejaVu Sans', sans-serif;
		font-weight: 700;
		font-size: 17px;
	}

	.lbl {
		direction: rtl;
		justify-content: flex-start;
		padding-right: 1px;
		font-size: 14.8px;
		font-weight: 700;
	}

	.lbl span {
		text-decoration: underline;
		text-decoration-thickness: 2px;
		text-underline-offset: 1px;
	}

	.jump {
		position: absolute;
		left: 1071px;
		top: 20px;
		width: 95px;
		height: 36px;
		box-sizing: border-box;
		background: #f0f0f0;
		border: 0;
		border-right: 2px solid #a0a0a0;
		border-bottom: 2px solid #a0a0a0;
		padding: 0;
		font-family: 'DejaVu Sans', sans-serif;
		font-size: 13px;
		font-weight: 700;
		color: #000;
		z-index: 2;
	}

	/* sheet tabs */
	.tabsbar {
		height: 28px;
		flex: none;
		box-sizing: border-box;
		background: #e6e6e6;
		border-top: 1px solid #9a9a9a;
		display: flex;
		align-items: center;
		position: relative;
		z-index: 2;
	}

	.hscroll {
		display: flex;
		margin-left: 3px;
		height: 15px;
	}

	.arrow {
		width: 14px;
		background: #fff;
		border: 1px solid #b5b5b5;
		box-sizing: border-box;
		display: flex;
		align-items: center;
		justify-content: center;
	}

	.track {
		width: 93px;
		background: #fff;
		border: 1px solid #b5b5b5;
		border-width: 1px 0;
		box-sizing: border-box;
	}

	.la,
	.ra {
		width: 0;
		height: 0;
		border: 4px solid transparent;
	}

	.la {
		border-right: 4px solid #777;
		border-left: 0;
	}

	.ra {
		border-left: 4px solid #777;
		border-right: 0;
	}

	.tdots {
		margin: 0 0 0 15px;
	}

	.plus {
		margin-left: 547px;
	}

	.tablist {
		margin-left: 36px;
		display: grid;
		grid-template-columns: 189px 149px 145px 103px 132px 103px 68px 111px 61px;
		height: 27px;
		align-self: flex-start;
		font-family: 'DejaVu Sans', sans-serif;
		font-size: 12.5px;
		color: #444;
	}

	.stab {
		display: flex;
		align-items: center;
		justify-content: center;
		white-space: nowrap;
		overflow: hidden;
		box-sizing: border-box;
		border-left: 1px solid #9a9a9a;
		margin: 3px 0 1px;
	}

	.stab:last-child {
		border-right: 1px solid #9a9a9a;
	}

	.stab.green {
		background: #92d050;
		color: #222;
		border-left: 0;
		margin: 3px 2px 0 3px;
	}

	.stab.active {
		background: #fff;
		color: #217346;
		font-weight: 700;
		font-size: 11px;
		border: 1px solid #9a9a9a;
		border-width: 0 1px;
		border-bottom: 2px solid #217346;
		margin: -1px 0 0;
	}

	.nav {
		display: flex;
		gap: 24px;
		margin-left: 38px;
		opacity: 0.5;
	}

	/* status bar */
	.status {
		flex: 1;
		background: #f3f3f3;
		border-top: 1px solid #c6c6c6;
		display: flex;
		overflow: hidden;
		align-items: flex-start;
		padding-left: 1612px;
		position: relative;
		z-index: 2;
	}

	.v {
		width: 40px;
		height: 8px;
		display: flex;
		justify-content: center;
	}

	.v.act {
		background: #c6c6c6;
	}

	.thumb {
		width: 4px;
		height: 6px;
		background: #666;
		margin-left: 69px;
	}

	.pct-s {
		font-size: 11px;
		line-height: 12px;
		margin-left: 60px;
		color: #444;
	}

	.mark {
		position: absolute;
		left: 826px;
		top: 925px;
		width: 228px;
		text-align: center;
		font-family: 'DejaVu Sans', sans-serif;
		font-weight: 700;
		font-size: 64px;
		line-height: 80px;
		color: rgba(150, 150, 150, 0.14);
		z-index: 3;
		pointer-events: none;
	}
</style>
